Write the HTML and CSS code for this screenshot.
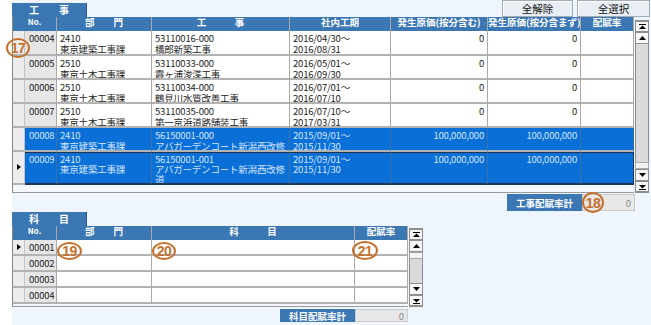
FILE: index.html
```html
<!DOCTYPE html>
<html lang="ja">
<head>
<meta charset="utf-8">
<title>工事配賦</title>
<link rel="stylesheet" href="styles.css">
</head>
<body>
<div class="panel">
  <div class="topbar">
    <div class="tab">工　　事</div>
    <div class="btns">
      <button class="btn b-clear">全解除</button>
      <button class="btn b-all">全選択</button>
    </div>
  </div>

  <div class="grid g1">
    <div class="table">
      <div class="row head">
        <div class="c hc span2">No.</div>
        <div class="c hc">部　　門</div>
        <div class="c hc">工　　　事</div>
        <div class="c hc">社内工期</div>
        <div class="c hc">発生原価(按分含む)</div>
        <div class="c hc clip">発生原価(按分含まず)</div>
        <div class="c hc">配賦率</div>
      </div>
      <div class="row r1">
        <div class="c ind"></div><div class="c no">00004</div>
        <div class="c">2410<br>東京建築工事課</div>
        <div class="c">53110016-000<br>橋郎新築工事</div>
        <div class="c">2016/04/30～<br>2016/08/31</div>
        <div class="c num">0</div><div class="c num">0</div><div class="c"></div>
      </div>
      <div class="row">
        <div class="c ind"></div><div class="c no">00005</div>
        <div class="c">2510<br>東京土木工事課</div>
        <div class="c">53110033-000<br>霞ヶ浦浚渫工事</div>
        <div class="c">2016/05/01～<br>2016/09/30</div>
        <div class="c num">0</div><div class="c num">0</div><div class="c"></div>
      </div>
      <div class="row">
        <div class="c ind"></div><div class="c no">00006</div>
        <div class="c">2510<br>東京土木工事課</div>
        <div class="c">53110034-000<br>鶴見川水質改善工事</div>
        <div class="c">2016/07/01～<br>2016/07/10</div>
        <div class="c num">0</div><div class="c num">0</div><div class="c"></div>
      </div>
      <div class="row">
        <div class="c ind"></div><div class="c no">00007</div>
        <div class="c">2510<br>東京土木工事課</div>
        <div class="c">53110035-000<br>第一京浜道路舗装工事</div>
        <div class="c">2016/07/10～<br>2017/03/31</div>
        <div class="c num">0</div><div class="c num">0</div><div class="c"></div>
      </div>
      <div class="row sel">
        <div class="c ind"></div><div class="c no">00008</div>
        <div class="c">2410<br>東京建築工事課</div>
        <div class="c">56150001-000<br>アバガーデンコート新潟西改修</div>
        <div class="c">2015/09/01～<br>2015/11/30</div>
        <div class="c num">100,000,000</div><div class="c num">100,000,000</div><div class="c"></div>
      </div>
      <div class="row sel cur tall">
        <div class="c ind"><span class="arrow"></span></div><div class="c no">00009</div>
        <div class="c">2410<br>東京建築工事課</div>
        <div class="c">56150001-001<br>アバガーデンコート新潟西改修<br>道</div>
        <div class="c">2015/09/01～<br>2015/11/30</div>
        <div class="c num">100,000,000</div><div class="c num">100,000,000</div><div class="c"></div>
      </div>
      <div class="blank"></div>
    </div>
    <div class="vscroll s1">
      <div class="sb sb-top"><svg width="7" height="6" viewBox="0 0 7 6"><rect x="0" y="0" width="7" height="1" fill="#000"/><path d="M0 5 L3.5 1.5 L7 5 Z" fill="#000"/></svg></div>
      <div class="sb sb-up"><svg width="7" height="4" viewBox="0 0 7 4"><path d="M0 4 L3.5 0 L7 4 Z" fill="#000"/></svg></div>
      <div class="track"></div>
      <div class="thumb"></div>
      <div class="sb sb-down"><svg width="7" height="4" viewBox="0 0 7 4"><path d="M0 0 L3.5 4 L7 0 Z" fill="#000"/></svg></div>
      <div class="sb sb-bot"><svg width="7" height="6" viewBox="0 0 7 6"><path d="M0 1 L3.5 4.5 L7 1 Z" fill="#000"/><rect x="0" y="5" width="7" height="1" fill="#000"/></svg></div>
    </div>
  </div>

  <div class="footer f1">
    <div class="flabel">工事配賦率計</div>
    <div class="fval">0</div>
  </div>

  <div class="tab tab2">科　　目</div>

  <div class="grid g2">
    <div class="table">
      <div class="row head">
        <div class="c hc span2">No.</div>
        <div class="c hc">部　　門</div>
        <div class="c hc">科　　　目</div>
        <div class="c hc">配賦率</div>
      </div>
      <div class="row">
        <div class="c ind"><span class="arrow"></span></div><div class="c no">00001</div>
        <div class="c"></div><div class="c"></div><div class="c"></div>
      </div>
      <div class="row">
        <div class="c ind"></div><div class="c no">00002</div>
        <div class="c"></div><div class="c"></div><div class="c"></div>
      </div>
      <div class="row">
        <div class="c ind"></div><div class="c no">00003</div>
        <div class="c"></div><div class="c"></div><div class="c"></div>
      </div>
      <div class="row">
        <div class="c ind"></div><div class="c no">00004</div>
        <div class="c"></div><div class="c"></div><div class="c"></div>
      </div>
      <div class="blank"></div>
    </div>
    <div class="vscroll s2">
      <div class="sb sb-top"><svg width="7" height="6" viewBox="0 0 7 6"><rect x="0" y="0" width="7" height="1" fill="#000"/><path d="M0 5 L3.5 1.5 L7 5 Z" fill="#000"/></svg></div>
      <div class="sb sb-up"><svg width="7" height="4" viewBox="0 0 7 4"><path d="M0 4 L3.5 0 L7 4 Z" fill="#000"/></svg></div>
      <div class="thumb"></div>
      <div class="track"></div>
      <div class="sb sb-down"><svg width="7" height="4" viewBox="0 0 7 4"><path d="M0 0 L3.5 4 L7 0 Z" fill="#000"/></svg></div>
      <div class="sb sb-bot"><svg width="7" height="6" viewBox="0 0 7 6"><path d="M0 1 L3.5 4.5 L7 1 Z" fill="#000"/><rect x="0" y="5" width="7" height="1" fill="#000"/></svg></div>
    </div>
  </div>

  <div class="footer f2">
    <div class="flabel">科目配賦率計</div>
    <div class="fval">0</div>
  </div>

  <div class="mark m17">17</div>
  <div class="mark m18">18</div>
  <div class="mark m19">19</div>
  <div class="mark m20">20</div>
  <div class="mark m21">21</div>
</div>
</body>
</html>
```

FILE: styles.css
```css
* { box-sizing: border-box; }
html, body { margin: 0; padding: 0; background: #ffffff; }
body {
  width: 651px;
  height: 325px;
  overflow: hidden;
  font-family: "Noto Sans CJK JP", "Noto Sans", sans-serif;
  font-size: 9.5px;
  color: #1e1e1e;
}
.panel {
  position: relative;
  margin-left: 12px;
  width: 639px;
  height: 325px;
  background: #eef5fc;
}
.topbar {
  height: 17px;
  display: flex;
  justify-content: space-between;
  align-items: flex-end;
}
.tab {
  width: 75px;
  height: 14px;
  background: #3b77b3;
  color: #ffffff;
  font-weight: bold;
  font-size: 10px;
  line-height: 14px;
  text-align: center;
  border-right: 1px solid #2a5a8a;
}
.tab2 { margin-top: 1px; }
.btns { display: flex; gap: 4px; margin-right: 1px; align-self: flex-start; }
.btn {
  height: 17px;
  padding: 0;
  margin: 0;
  font-family: "Noto Sans CJK JP", sans-serif;
  font-size: 10.5px;
  line-height: 15px;
  color: #111;
  background: #e8eef4;
  border: 1px solid #a3abb3;
  box-shadow: inset 1px 1px 0 #ffffff;
}
.b-clear { width: 71px; }
.b-all { width: 73px; }

.grid { display: flex; gap: 1px; }
.g1 { height: 176px; }
.g2 { height: 81px; }
.table {
  border-left: 1px solid #8a8a8a;
  border-bottom: 1px solid #9a9a9a;
  background: #f3f7fb;
  display: flex;
  flex-direction: column;
}
.g1 .table { width: 622px; }
.g2 .table { width: 396px; }
.row { display: grid; }
.g1 .row { grid-template-columns: 12px 32px 95px 138px 101px 97px 93px 53px; }
.g2 .row { grid-template-columns: 12px 32px 95px 203px 53px; }
.g1 .row.head { grid-template-columns: 44px 95px 138px 101px 97px 93px 53px; }
.g2 .row.head { grid-template-columns: 44px 95px 203px 53px; }
.row.head { height: 14px; background: #3b77b3; }
.hc {
  color: #ffffff;
  font-weight: bold;
  font-size: 9.5px;
  line-height: 14px;
  text-align: center;
  border-right: 1px solid #6f9bc7;
  white-space: nowrap;
}
.row.head .c { overflow: visible; }
.row.head .c.clip { overflow: hidden; }
.hc.span2 { font-size: 8px; }
.hc.clip { text-align: left; padding-left: 3px; }

.g1 .row { height: 24px; }
.g1 .row.r1 { height: 25px; }
.g1 .row.tall { height: 33px; }
.g2 .row:not(.head) { height: 16px; }
.g1 .row.head, .g2 .row.head { height: 14px; }

.c {
  line-height: 10.5px;
  letter-spacing: -0.2px;
  padding: 2px 3px 0 3px;
  background: #ffffff;
  border-right: 1px solid #a9a9a9;
  border-bottom: 2px solid #b3b3b3;
  white-space: nowrap;
  overflow: hidden;
}
.row.head .c { padding: 0; border-bottom: none; background: transparent; letter-spacing: 0; }
.c.ind { background: #ececec; border-right: 1px solid #c4c4c4; padding: 0; position: relative; }
.c.no { background: #e6e6e6; padding-left: 4px; }
.c.num { text-align: right; }
.g2 .c { padding-top: 2px; }

.row.sel .c { background: #0a6fd6; color: #d3e4fb; border-right-color: #3b6fa6; }
.row.sel .c.ind { background: #ececec; border-right-color: #c4c4c4; }
.row.cur .c:not(.ind) { border-top: 1px solid #1e3554; border-bottom-color: #1e3554; padding-top: 1px; line-height: 10px; }
.row.cur .c:last-child { border-right-color: #1e3554; }

.arrow {
  position: absolute;
  left: 4px;
  top: 50%;
  margin-top: -4px;
  width: 0; height: 0;
  border-top: 3.5px solid transparent;
  border-bottom: 3.5px solid transparent;
  border-left: 4px solid #000;
}
.g2 .arrow { top: 4px; margin-top: 0; }

.blank { flex: 1; background: #f3f7fb; }

.vscroll {
  width: 14px;
  display: flex;
  flex-direction: column;
  background: #dadada;
  border: 1px solid #8e8e8e;
}
.s1 { margin-top: 3px; }
.s2 { margin-top: 2px; height: 79px; }
.sb {
  background: #f6f6f6;
  border: 1px solid #8e8e8e;
  display: flex;
  align-items: center;
  justify-content: center;
  margin: 0 -1px;
}
.sb-top, .sb-bot { height: 11px; }
.sb-up, .sb-down { height: 12px; }
.track { flex: 1; }
.thumb { height: 7px; background: #f2f2f2; border: 1px solid #a8a8a8; margin: 0 -1px; }

.footer { display: flex; justify-content: flex-end; }
.f1 { width: 623px; height: 17px; margin-top: 1px; }
.f2 { width: 396px; height: 13px; margin-top: 2px; }
.flabel {
  width: 75px;
  background: #3b77b3;
  color: #ffffff;
  font-weight: bold;
  font-size: 9.5px;
  text-align: center;
  display: flex;
  align-items: center;
  justify-content: center;
}
.fval {
  width: 53px;
  background: #e8e8e8;
  border: 1px solid #cbcbcb;
  color: #8a8a8a;
  text-align: right;
  padding-right: 3px;
  display: flex;
  align-items: center;
  justify-content: flex-end;
}

.mark {
  position: absolute;
  border: 2px solid #c5702c;
  border-radius: 50%;
  color: #c5702c;
  font-family: "Liberation Sans", sans-serif;
  font-weight: bold;
  font-size: 14px;
  display: flex;
  align-items: center;
  justify-content: center;
  letter-spacing: -0.5px;
}
.m17 { left: -6px; top: 38px; width: 24px; height: 20px; }
.m18 { left: 570px; top: 192px; width: 22px; height: 21px; }
.m19 { left: 45px; top: 242px; width: 25px; height: 18px; }
.m20 { left: 140px; top: 242px; width: 24px; height: 18px; }
.m21 { left: 340px; top: 241px; width: 26px; height: 19px; }
```
